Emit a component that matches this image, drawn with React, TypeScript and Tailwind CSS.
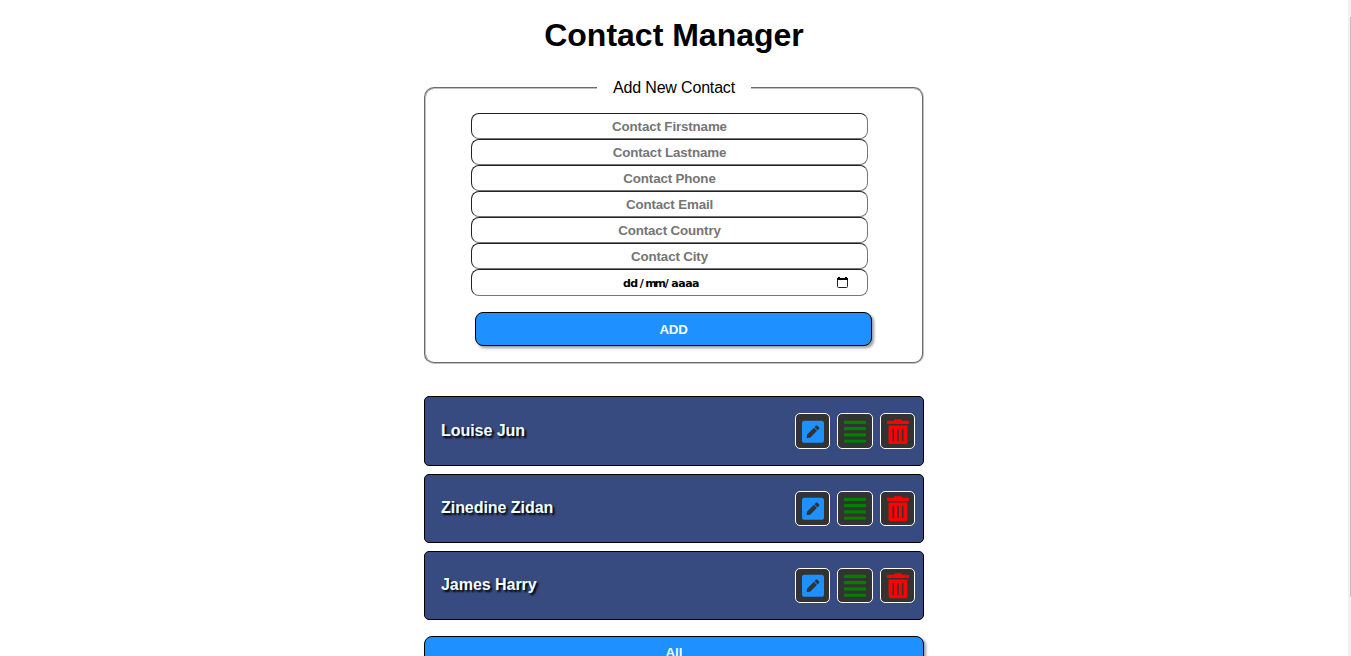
import React from "react";
import { FaPenSquare, FaAlignJustify, FaTrashAlt } from "react-icons/fa";

const fields = ["Firstname", "Lastname", "Phone", "Email", "Country", "City"];
const contacts = ["Louise Jun", "Zinedine Zidan", "James Harry"];

const inputClass =
  "block w-[397px] rounded-[8px] border border-t-[#222] border-l-[#222] border-r-[#767676] border-b-[#767676] bg-white";
const iconButton =
  "flex h-[35.3px] w-[35.4px] items-center justify-center rounded-[5px] border border-white bg-[#333] pt-px pl-[0.6px]";

function ContactRow({ name }: { name: string }) {
  return (
    <li className="flex h-[69.2px] items-center justify-between rounded-[5px] border border-black bg-[#384b80] pl-4 pr-2">
      <span className="-mt-[1px] text-[16px] leading-5 font-bold tracking-[-0.04px] text-[azure] [text-shadow:2px_2px_2px_#000]">
        {name}
      </span>
      <div className="flex gap-[7px]">
        <button className={iconButton} aria-label="Edit">
          <FaPenSquare className="h-[25.6px] w-[22px] text-[dodgerblue]" />
        </button>
        <button className={iconButton} aria-label="Details">
          <FaAlignJustify className="h-[25.6px] w-[22px] text-[green]" />
        </button>
        <button className={iconButton} aria-label="Delete">
          <FaTrashAlt className="h-[25.6px] w-[22px] text-[red]" />
        </button>
      </div>
    </li>
  );
}

export default function App() {
  return (
    <div className="flex h-[656px] overflow-hidden bg-white font-['Liberation_Sans',Arial,sans-serif] text-black">
      <main className="flex flex-1 flex-col items-center">
        <h1 className="mt-[17px] text-[32px] leading-[37px] font-bold">Contact Manager</h1>
        <fieldset className="mt-[24px] h-[286.4px] w-[500px] shrink-0 rounded-[10px] border-2 border-[#c0c0c0] px-[45px] [border-style:groove]">
          <legend className="mx-auto px-4 text-[16px] leading-[19px] tracking-[-0.17px]">Add New Contact</legend>
          <div className="pt-[16px]">
            {fields.map((field) => (
              <input
                key={field}
                placeholder={`Contact ${field}`}
                className={`${inputClass} h-[26px] text-center text-[13.333px] font-bold tracking-[-0.13px] placeholder:text-[#757575]`}
              />
            ))}
            <div className={`${inputClass} flex h-[27px] items-center pr-[19px] pl-[151px]`}>
              <span className="flex flex-1 pt-[2px] font-['DejaVu_Sans',sans-serif] text-[11px] leading-4 font-bold tracking-[-0.5px]">
                <span>dd</span>
                <span className="ml-[2px]">/</span>
                <span className="ml-[2px] tracking-[-2.2px]">mm</span>
                <span className="ml-[1px]">/</span>
                <span className="ml-[3px]">aaaa</span>
              </span>
              <svg className="-mt-[1px] h-[11px] w-[11px]" viewBox="0 0 11 11" fill="none">
                <path d="M.5 2.5h10v7a1 1 0 0 1-1 1h-8a1 1 0 0 1-1-1z" stroke="#222" />
                <path d="M0 1h1V0h2v1h5V0h2v1h1v2H0z" fill="#000" />
              </svg>
            </div>
            <button className="mt-4 ml-[4px] block h-[34.4px] w-[397px] rounded-[8px] border border-black bg-[dodgerblue] pt-px text-[13.333px] font-bold tracking-[-0.3px] text-[azure] shadow-[2px_2px_3px_rgba(0,0,0,0.4)]">
              ADD
            </button>
          </div>
        </fieldset>
        <ul className="mt-[32.1px] flex w-[500px] shrink-0 flex-col gap-[8px]">
          {contacts.map((name) => (
            <ContactRow key={name} name={name} />
          ))}
        </ul>
        <button className="mt-4 h-[34.4px] w-[500px] shrink-0 rounded-[8px] border border-black bg-[dodgerblue] text-[13.333px] font-bold text-[azure] shadow-[2px_2px_3px_rgba(0,0,0,0.4)]">
          All
        </button>
      </main>
      <div className="flex w-[3px] flex-col items-end bg-[#f1f1f1] pt-[17px]">
        <div className="h-[580px] w-px bg-[#c1c1c1]" />
      </div>
    </div>
  );
}
